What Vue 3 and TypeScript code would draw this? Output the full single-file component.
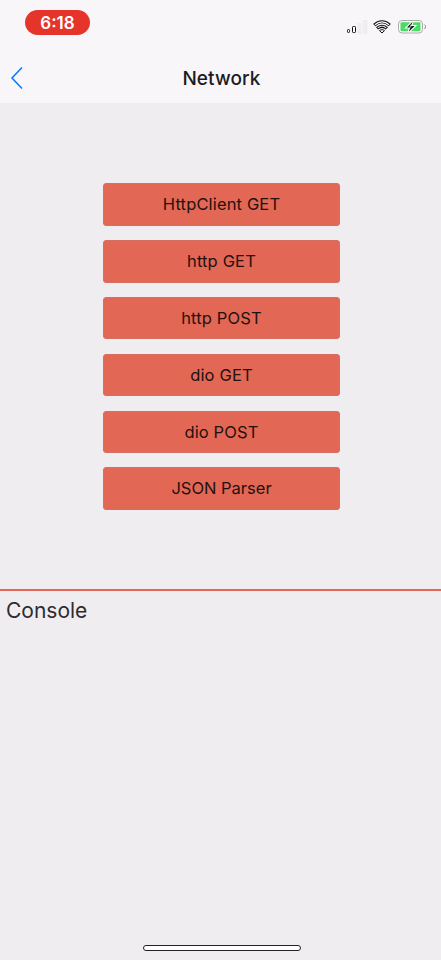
<script setup lang="ts">
interface RequestAction {
  id: string
  label: string
}

const time = '6:18'
const title = 'Network'
const actions: RequestAction[] = [
  { id: 'client-get', label: 'HttpClient GET' },
  { id: 'http-get', label: 'http GET' },
  { id: 'http-post', label: 'http POST' },
  { id: 'dio-get', label: 'dio GET' },
  { id: 'dio-post', label: 'dio POST' },
  { id: 'json', label: 'JSON Parser' },
]
</script>

<template>
  <div class="screen">
    <header class="header">
      <div class="status">
        <span class="time">{{ time }}</span>
        <div class="indicators">
          <svg class="signal" width="22" height="14" viewBox="0 0 22 14" aria-hidden="true">
            <rect x="11.5" y="3" width="4" height="11" fill="#eeedf0" />
            <rect x="16.5" y="0" width="5" height="14" fill="#eeedf0" />
            <rect x="1.5" y="9.5" width="2" height="3" rx="0.8" fill="#fff" stroke="#111" />
            <rect x="6.5" y="6.5" width="3" height="6" rx="0.8" fill="#fff" stroke="#111" />
          </svg>
          <svg class="wifi" width="18" height="14" viewBox="0 0 18 14" aria-hidden="true">
            <g fill="none" stroke="#111" stroke-width="3.2">
              <path d="M1.3 5.2C5.6.6 12.4.6 16.7 5.2" />
              <path d="M4.1 8.4C6.8 5.6 11.2 5.6 13.9 8.4" />
            </g>
            <g fill="none" stroke="#fff" stroke-width="1.2">
              <path d="M2 4.7C6 1 12 1 16 4.7" />
              <path d="M4.8 7.9C7.2 5.7 10.8 5.7 13.2 7.9" />
            </g>
            <path d="M6.5 10.6C8 9.4 10 9.4 11.5 10.6L9 13Z" fill="#fff" stroke="#111" stroke-width="1" />
          </svg>
          <svg class="battery" width="28" height="14" viewBox="0 0 28 14" aria-hidden="true">
            <rect x="0.5" y="0.5" width="24" height="12.5" rx="3.5" fill="#fbfafc" stroke="#aaa9ac" />
            <rect x="2.5" y="2.3" width="20" height="9" rx="1.2" fill="#4bdc67" />
            <path d="M26.3 4.5C28 5.4 28 8.1 26.3 9" fill="none" stroke="#8d8c90" />
            <path d="M14.6 1.7 8.9 7.5h3.5L10.7 11.8 16.6 6h-3.6Z" fill="#111" stroke="#fff" stroke-width="2.2" paint-order="stroke" />
            <path d="M13.3 4.4 12 6.8h1.4" fill="none" stroke="#fff" stroke-width="0.7" />
          </svg>
        </div>
      </div>
      <nav class="nav">
        <button class="back" type="button" aria-label="Back">
          <svg width="14" height="24" viewBox="0 0 14 24" aria-hidden="true">
            <path d="M12 1.5 2 12 12 22.5" fill="none" stroke="#087dff" stroke-width="1.6" />
          </svg>
        </button>
        <h1 class="title">{{ title }}</h1>
        <span></span>
      </nav>
    </header>
    <main class="actions">
      <button v-for="action in actions" :key="action.id" class="action" type="button">{{ action.label }}</button>
    </main>
    <section class="console">
      <h2 class="console-title">Console</h2>
    </section>
    <footer class="footer"><div class="home"></div></footer>
  </div>
</template>

<style>
body {
  background: #efedf0;
}
</style>

<style scoped>
.screen {
  display: flex;
  flex-direction: column;
  box-sizing: border-box;
  height: 960px;
  background: #efedf0;
  font-family: Inter, "Liberation Sans", sans-serif;
  color: #1d1b1e;
}
.header {
  height: 103px;
  background: #f8f6f9;
}
.status {
  display: flex;
  justify-content: space-between;
  box-sizing: border-box;
  height: 53px;
  padding: 10px 15px 0 25px;
}
.time {
  width: 65px;
  height: 25px;
  border-radius: 12.5px;
  background: #e5352b;
  color: #fff;
  font-size: 17px;
  font-weight: 600;
  line-height: 26px;
  text-align: center;
}
.indicators {
  display: flex;
  align-items: flex-start;
  padding-top: 10px;
}
.wifi {
  margin-left: 5px;
}
.battery {
  margin-left: 7px;
}
.nav {
  display: grid;
  grid-template-columns: 61px 1fr 59px;
  align-items: center;
  height: 50px;
}
.back {
  display: flex;
  width: 44px;
  padding: 0 0 0 10px;
  border: 0;
  background: none;
}
.title {
  margin: 0;
  padding-top: 1px;
  font-size: 19px;
  font-weight: 500;
  letter-spacing: 0.1px;
  line-height: 24px;
  text-align: center;
}
.actions {
  display: flex;
  flex-direction: column;
  align-items: center;
  gap: 14.2px;
  box-sizing: border-box;
  height: 486px;
  padding: 80px 0 0 2px;
}
.action {
  width: 237px;
  height: 42.7px;
  flex: none;
  padding: 0;
  border: 1px solid #d66f61;
  border-radius: 3px;
  background: #e26754;
  color: #24110f;
  font-family: inherit;
  font-size: 16.5px;
  letter-spacing: 0.15px;
  line-height: 40px;
}
.action:nth-child(n + 5) {
  padding-bottom: 1px;
}
.action:last-child {
  letter-spacing: 0;
}
.console {
  flex: 1;
  padding: 5px 6px;
  border-top: 2px solid #e4655b;
}
.console-title {
  margin: 0;
  color: #2d2b2e;
  font-size: 21px;
  font-weight: 400;
  line-height: 29px;
}
.footer {
  display: flex;
  justify-content: center;
  padding: 0 0 9px 3px;
}
.home {
  box-sizing: border-box;
  width: 158px;
  height: 6px;
  border: 1px solid #222;
  border-radius: 3px;
  background: #fff;
}
</style>
